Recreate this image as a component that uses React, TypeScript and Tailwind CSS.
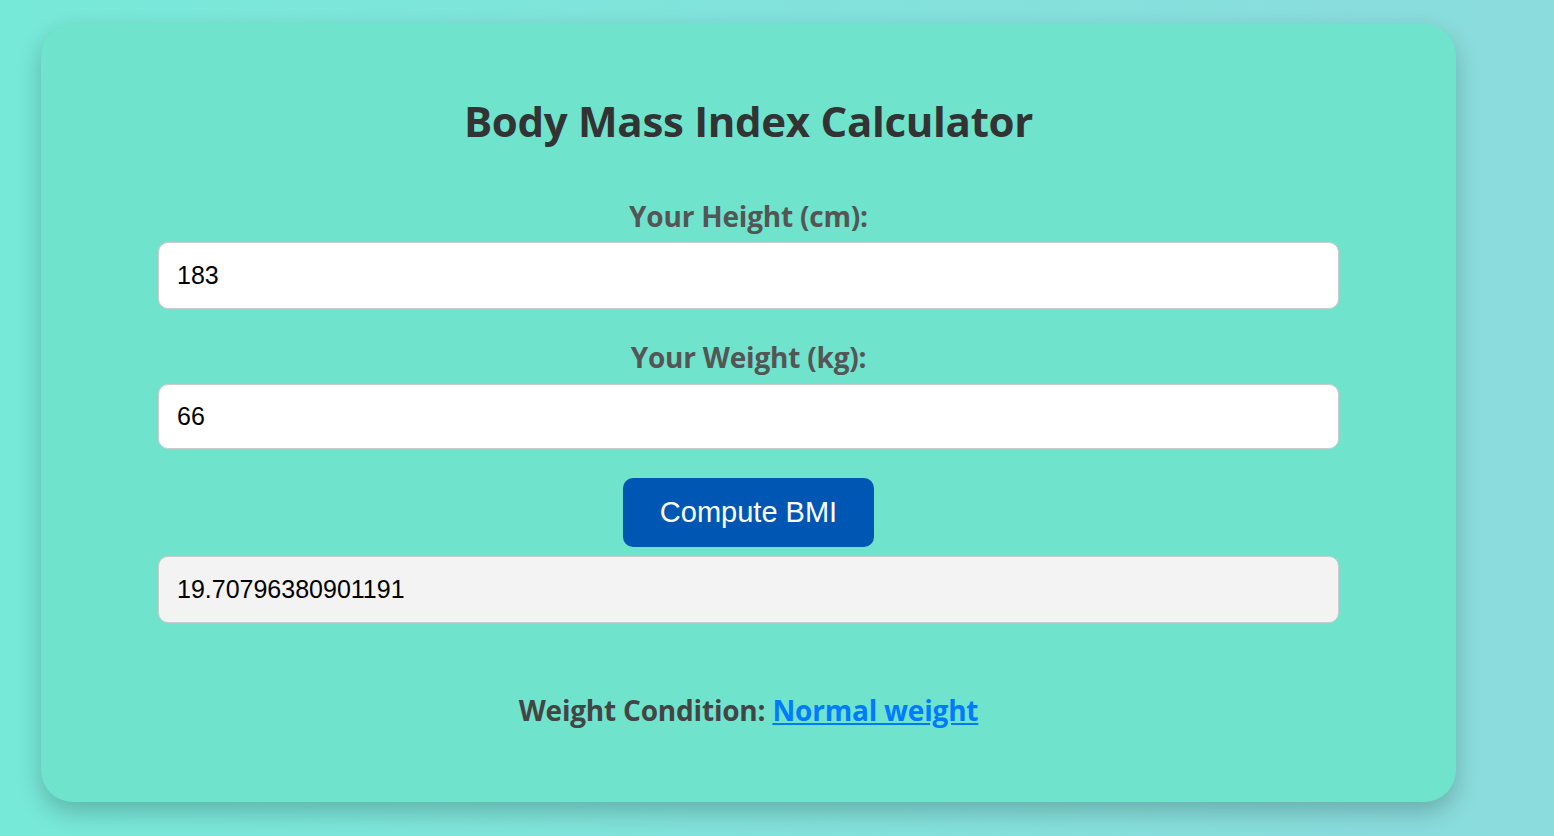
import React from "react";

export default function App() {
  return (
    <div className="min-h-[836px] w-full bg-gradient-to-r from-[#77e9d9] to-[#8bdcdd] pt-[24px] pl-[41px]" style={{ fontFamily: '"Open Sans", "Noto Sans", sans-serif' }}>
      <div className="w-[1415px] h-[778px] rounded-[32px] bg-[#6fe3cc] shadow-[0_10px_24px_rgba(0,0,0,0.22)] flex flex-col items-center pt-[76px]">
        <h1 className="text-[42px] leading-[1] font-bold text-[#333] tracking-[-0.3px]">Body Mass Index Calculator</h1>
        <label className="mt-[60px] text-[28px] leading-[1] font-bold text-[#555] tracking-[-0.2px]">Your Height (cm):</label>
        <div className="mt-[12px] w-[1181px] h-[67px] rounded-[10px] border border-[#cccccc] bg-white flex items-center pl-[18px] text-[25px] text-black" style={{ fontFamily: '"Liberation Sans", Arial, sans-serif' }}>183</div>
        <label className="mt-[34px] text-[28px] leading-[1] font-bold text-[#555] tracking-[-0.2px]">Your Weight (kg):</label>
        <div className="mt-[13px] w-[1181px] h-[65px] rounded-[10px] border border-[#cccccc] bg-white flex items-center pl-[18px] text-[25px] text-black" style={{ fontFamily: '"Liberation Sans", Arial, sans-serif' }}>66</div>
        <button className="mt-[29px] w-[251px] h-[69px] rounded-[10px] bg-[#0056b3] text-white text-[29px]" style={{ fontFamily: '"Liberation Sans", Arial, sans-serif' }}>Compute BMI</button>
        <div className="mt-[9px] w-[1181px] h-[67px] rounded-[10px] border border-[#cccccc] bg-[#f3f3f3] flex items-center pl-[18px] text-[25px] text-black" style={{ fontFamily: '"Liberation Sans", Arial, sans-serif' }}>19.70796380901191</div>
        <p className="mt-[73px] text-[28px] leading-[1] font-bold text-[#444] tracking-[-0.2px]">
          Weight Condition: <span className="text-[#007bff] underline">Normal weight</span>
        </p>
      </div>
    </div>
  );
}
